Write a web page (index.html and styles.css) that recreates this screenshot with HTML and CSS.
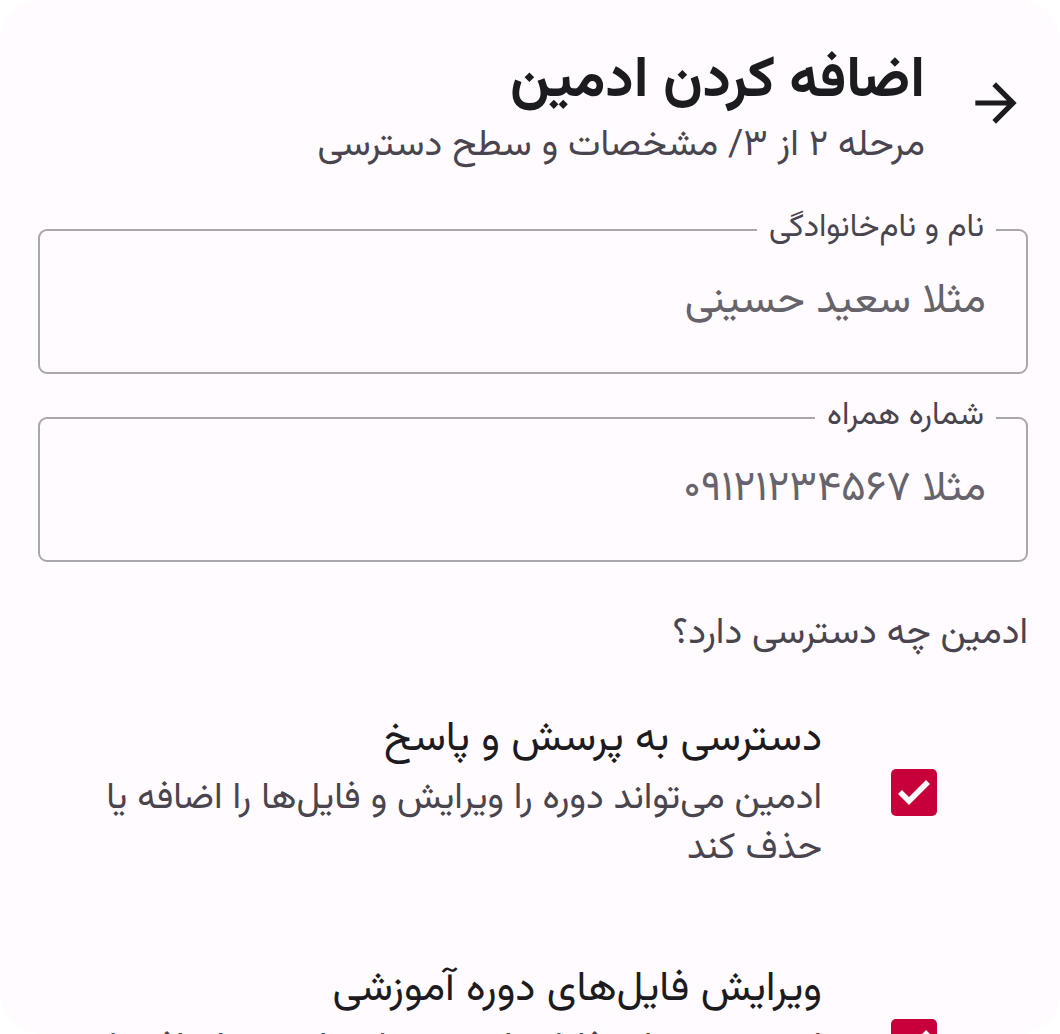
FILE: index.html
```html
<!DOCTYPE html>
<html lang="fa" dir="rtl">
<head>
<meta charset="utf-8">
<title>اضافه کردن ادمین</title>
<link rel="stylesheet" href="styles.css">
</head>
<body>
<div class="card">
  <header class="header">
    <button class="back" aria-label="بازگشت">
      <svg viewBox="0 0 24 24" width="62" height="62"><path d="M12 4l-1.41 1.41L16.17 11H4v2h12.17l-5.58 5.59L12 20l8-8z" fill="#1c1b1f"/></svg>
    </button>
    <div class="titles">
      <h1 class="title">اضافه کردن ادمین</h1>
      <p class="subtitle">مرحله ۲ از ۳/ مشخصات و سطح دسترسی</p>
    </div>
  </header>

  <div class="fields">
    <label class="field">
      <span class="field-label">نام و نام‌خانوادگی</span>
      <span class="placeholder">مثلا سعید حسینی</span>
    </label>
    <label class="field">
      <span class="field-label">شماره همراه</span>
      <span class="placeholder">مثلا ۰۹۱۲۱۲۳۴۵۶۷</span>
    </label>
  </div>

  <p class="question">ادمین چه دسترسی دارد؟</p>

  <div class="perms">
    <div class="perm">
      <div class="check-wrap">
        <span class="check"><svg viewBox="0 0 46 46" width="46" height="46"><polyline points="9,23 18,32 37,13" fill="none" stroke="#fff" stroke-width="5.5"/></svg></span>
      </div>
      <div class="perm-text">
        <div class="perm-title">دسترسی به پرسش و پاسخ</div>
        <div class="perm-desc">ادمین می‌تواند دوره را ویرایش و فایل‌ها را اضافه یا حذف کند</div>
      </div>
    </div>
    <div class="perm">
      <div class="check-wrap">
        <span class="check"><svg viewBox="0 0 46 46" width="46" height="46"><polyline points="9,23 18,32 37,13" fill="none" stroke="#fff" stroke-width="5.5"/></svg></span>
      </div>
      <div class="perm-text">
        <div class="perm-title">ویرایش فایل‌های دوره آموزشی</div>
        <div class="perm-desc">ادمین می‌تواند فایل‌های دوره را ویرایش و اضافه یا حذف کند</div>
      </div>
    </div>
  </div>
</div>
</body>
</html>
```

FILE: styles.css
```css
* { box-sizing: border-box; }
html, body { margin: 0; padding: 0; background: #ffffff; }
body {
  font-family: "Vazirmatn", "Noto Sans Arabic", "DejaVu Sans", sans-serif;
  color: #1c1b1f;
  overflow: hidden;
}
.card {
  width: 1060px;
  height: 1034px;
  background: #fffbfe;
  border-radius: 40px;
  overflow: hidden;
  padding: 46px 32px 0 32px;
}
.header {
  display: flex;
  align-items: flex-start;
  gap: 40px;
  padding-right: 1px;
}
.back {
  border: 0;
  background: transparent;
  padding: 0;
  margin-top: 26px;
  width: 62px;
  height: 62px;
  display: flex;
  align-items: center;
  justify-content: center;
  cursor: pointer;
  flex: none;
}
.back svg { display: block; }
.titles { display: flex; flex-direction: column; }
.title {
  margin: 0;
  font-size: 57px;
  font-weight: 700;
  line-height: 74px;
  color: #1c1b1f;
}
.subtitle {
  margin: 0;
  font-size: 37px;
  line-height: 52px;
  color: #49454f;
}
.fields {
  display: flex;
  flex-direction: column;
  gap: 43px;
  margin: 57px 0 0 6px;
}
.field {
  position: relative;
  display: flex;
  align-items: center;
  height: 145px;
  border: 2px solid #a9a6ad;
  border-radius: 9px;
  padding: 0 40px;
}
.field-label {
  position: absolute;
  top: -26px;
  right: 30px;
  padding: 0 12px;
  background: #fffbfe;
  font-size: 32px;
  line-height: 46px;
  color: #49454f;
}
.placeholder {
  font-size: 42px;
  color: #66636b;
}
.question {
  margin: 46px 0 0 0;
  font-size: 37px;
  line-height: 52px;
  color: #49454f;
}
.perms {
  display: flex;
  flex-direction: column;
  gap: 86px;
  margin-top: 50px;
}
.perm {
  display: flex;
  align-items: center;
  gap: 40px;
}
.check-wrap {
  width: 104px;
  height: 104px;
  margin-right: 62px;
  display: flex;
  align-items: center;
  justify-content: center;
  flex: none;
}
.check {
  width: 46px;
  height: 47px;
  border-radius: 5px;
  background: #c8003a;
  display: block;
}
.check svg { display: block; }
.perm-text { width: 736px; }
.perm-title {
  font-size: 42px;
  line-height: 60px;
  color: #1c1b1f;
}
.perm-desc {
  margin-top: 4px;
  font-size: 37px;
  line-height: 50px;
  color: #49454f;
}
```
